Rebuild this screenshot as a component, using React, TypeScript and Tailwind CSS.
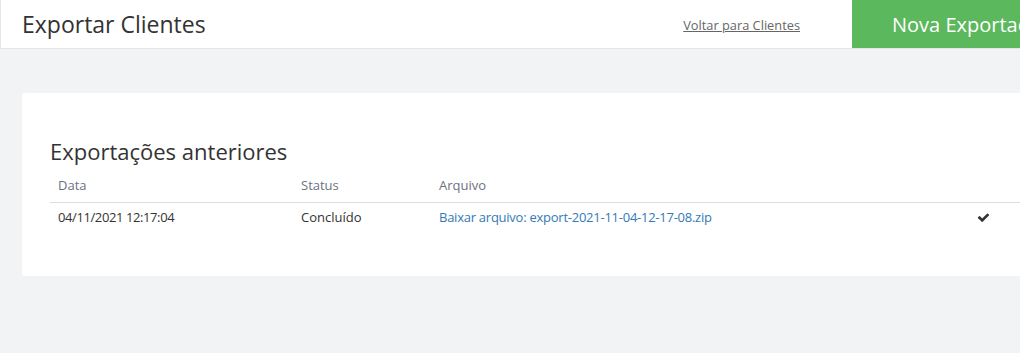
const rows = [
  {
    data: '04/11/2021 12:17:04',
    status: 'Concluído',
    arquivo: 'Baixar arquivo: export-2021-11-04-12-17-08.zip',
  },
];

function CheckIcon() {
  return (
    <svg viewBox="0 0 1792 1792" className="w-[13px] h-[13px]" fill="#333">
      <path d="M1671 566q0 40-28 68l-724 724-136 136q-28 28-68 28t-68-28l-136-136-362-362q-28-28-28-68t28-68l136-136q28-28 68-28t68 28l294 295 656-657q28-28 68-28t68 28l136 136q28 28 28 68z" />
    </svg>
  );
}

export default function App() {
  return (
    <div
      className="h-[353px] w-full overflow-hidden bg-[#f2f3f5]"
      style={{ fontFamily: '"Open Sans", "Liberation Sans", sans-serif' }}
    >
      {/* cabeçalho */}
      <header className="flex h-[49px] w-[1160px] items-stretch border-b border-l border-[#e4e6ea] bg-white">
        <h1 className="flex items-center pl-[21px] text-[23px] text-[#333] flex-1">
          Exportar Clientes
        </h1>
        <a href="#" className="flex items-center pt-[3px] pr-[52px] text-[12.8px] text-[#666] underline">
          Voltar para Clientes
        </a>
        <button className="flex items-center bg-[#5cb85c] pl-10 pr-10 pt-[2px] text-[20px] text-white w-[308px]">
          Nova Exportação
        </button>
      </header>

      {/* conteúdo */}
      <div className="pt-[44px] pl-[22px]">
        <div className="w-[1100px] rounded-[3px] bg-white pt-[43px] pb-[43px] pl-[28px] pr-[28px]">
          <h2 className="text-[22px] text-[#333] leading-[30px] mb-[4px]">Exportações anteriores</h2>
          <table className="w-full text-[13px] border-collapse">
            <thead>
              <tr className="border-b border-[#dddddd] text-left text-[#6b7280]">
                <th className="font-normal w-[243px] px-2 py-[6px]">Data</th>
                <th className="font-normal w-[138px] px-2 py-[6px]">Status</th>
                <th className="font-normal w-[538px] px-2 py-[6px]">Arquivo</th>
                <th className="font-normal px-2 py-[6px]"></th>
              </tr>
            </thead>
            <tbody>
              {rows.map((r) => (
                <tr key={r.data} className="text-[#333]">
                  <td className="px-2 pt-[5px] pb-[6px] tracking-[-0.4px]">{r.data}</td>
                  <td className="px-2 pt-[5px] pb-[6px]">{r.status}</td>
                  <td className="px-2 pt-[5px] pb-[6px] tracking-[-0.25px]">
                    <a href="#" className="text-[#337ab7]">{r.arquivo}</a>
                  </td>
                  <td className="px-2 pt-[5px] pb-[6px]">
                    <CheckIcon />
                  </td>
                </tr>
              ))}
            </tbody>
          </table>
        </div>
      </div>
    </div>
  );
}
